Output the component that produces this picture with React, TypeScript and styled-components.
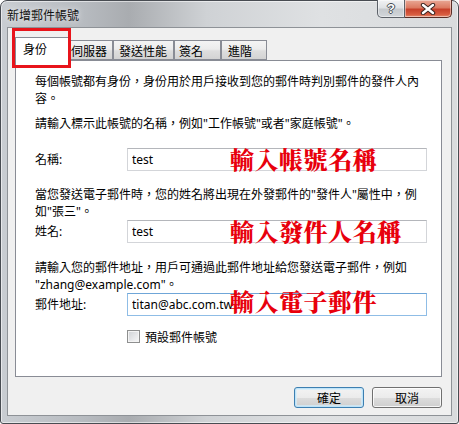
import React from "react";
import styled, { createGlobalStyle } from "styled-components";

const Global = createGlobalStyle`
  html, body { margin: 0; padding: 0; background: #ffffff; }
  body {
    font-family: "Noto Sans", "Noto Sans CJK TC", sans-serif;
    font-size: 12px;
    color: #000;
  }
  * { box-sizing: border-box; }
`;

const Window = styled.div`
  width: 459px;
  height: 424px;
  display: flex;
  flex-direction: column;
  border: 1px solid #484c52;
  border-radius: 7px 7px 3px 3px;
  padding: 0 6px 7px 6px;
  background: linear-gradient(
    90deg,
    #c9cdd2 0%,
    #b7bbc0 18%,
    #a9acb0 28%,
    #cfd2d5 45%,
    #dfe1e3 70%,
    #d9dbdd 100%
  );
  box-shadow: inset 0 0 0 1px rgba(255, 255, 255, 0.55);
`;

const TitleBar = styled.div`
  height: 26px;
  display: flex;
  align-items: center;
  justify-content: space-between;
`;

const Title = styled.span`
  font-family: "Noto Sans CJK TC", sans-serif;
  font-size: 12px;
  color: #111;
  text-shadow: 0 0 6px rgba(255, 255, 255, 0.9);
`;

const CaptionGroup = styled.div`
  display: flex;
  align-self: flex-start;
  margin-top: -1px;
`;

const CaptionButton = styled.div<{ $kind: "help" | "close" }>`
  height: 18px;
  width: ${(p) => (p.$kind === "help" ? 28 : 47)}px;
  display: flex;
  align-items: center;
  justify-content: center;
  border: 1px solid ${(p) => (p.$kind === "help" ? "#5c6168" : "#5a2e26")};
  border-top: none;
  border-left: ${(p) => (p.$kind === "help" ? "1px solid #5c6168" : "none")};
  border-radius: ${(p) => (p.$kind === "help" ? "0 0 0 5px" : "0 0 5px 0")};
  background: ${(p) =>
    p.$kind === "help"
      ? "linear-gradient(180deg, #f1f2f4 0%, #dfe2e5 45%, #c6cace 55%, #d2d6da 100%)"
      : "linear-gradient(180deg, #e9a896 0%, #dc7a62 45%, #c7402a 55%, #d85c40 85%, #e58d6f 100%)"};
  box-shadow: inset 0 0 0 1px rgba(255, 255, 255, 0.45);
`;

const HelpGlyph = styled.span`
  font-family: "Liberation Sans", sans-serif;
  font-weight: bold;
  font-size: 13px;
  line-height: 1;
  color: #fff;
  text-shadow: 1px 0 0 #454b53, -1px 0 0 #454b53, 0 1px 0 #454b53, 0 -1px 0 #454b53;
`;

const Client = styled.div`
  flex: 1;
  display: flex;
  flex-direction: column;
  background: #f0f0f0;
  border: 1px solid #8e9297;
  padding: 9px 9px 7px 7px;
`;

const TabStrip = styled.div`
  height: 23px;
  display: flex;
  align-items: flex-end;
`;

const Tab = styled.div<{ $active?: boolean; $w: number; $pl: number }>`
  position: relative;
  width: ${(p) => p.$w}px;
  height: ${(p) => (p.$active ? 24 : 20)}px;
  margin-bottom: ${(p) => (p.$active ? -1 : 0)}px;
  padding-left: ${(p) => p.$pl}px;
  padding-top: ${(p) => (p.$active ? 3 : 2)}px;
  border: 1px solid #898c95;
  border-bottom: ${(p) => (p.$active ? "none" : "1px solid #898c95")};
  background: ${(p) =>
    p.$active
      ? "#ffffff"
      : "linear-gradient(180deg, #f4f4f4 0%, #ececec 45%, #dedede 55%, #d3d3d3 100%)"};
  z-index: ${(p) => (p.$active ? 2 : 1)};
  font-family: "Noto Sans CJK TC", sans-serif;
  font-size: 12px;
  line-height: 16px;
  white-space: nowrap;
`;

const Highlight = styled.div`
  position: absolute;
  left: -4px;
  top: -10px;
  width: 59px;
  height: 40px;
  border: 3px solid #e8141b;
  pointer-events: none;
`;

const Panel = styled.div`
  height: 317px;
  background: #ffffff;
  border: 1px solid #898c95;
  padding: 12px 0 0 19px;
  display: flex;
  flex-direction: column;
`;

const Para = styled.p<{ $mt: number }>`
  margin: ${(p) => p.$mt}px 0 0 0;
  line-height: 17px;
  white-space: nowrap;
`;

const FieldRow = styled.div<{ $mt: number }>`
  position: relative;
  margin-top: ${(p) => p.$mt}px;
  display: flex;
  align-items: center;
  height: 23px;
`;

const Label = styled.span`
  width: 92px;
  line-height: 17px;
`;

const TextBox = styled.input<{ $focused?: boolean }>`
  width: 300px;
  height: 23px;
  padding: 0 4px;
  margin: 0;
  font-family: "Noto Sans", "Noto Sans CJK TC", sans-serif;
  font-size: 12px;
  color: #000;
  background: #fff;
  border: 1px solid ${(p) => (p.$focused ? "#8fbde6" : "#d3d5d9")};
  border-top-color: ${(p) => (p.$focused ? "#6fa6d8" : "#b4b6bb")};
  outline: none;
`;

const Annotation = styled.span<{ $top: number }>`
  position: absolute;
  left: 195px;
  top: ${(p) => p.$top}px;
  font-family: "Noto Serif CJK TC", "Noto Sans CJK TC", serif;
  font-weight: 900;
  font-size: 24px;
  line-height: 24px;
  letter-spacing: 0.5px;
  color: #e8000c;
  white-space: nowrap;
  pointer-events: none;
`;

const CheckRow = styled.label`
  margin: 14px 0 0 92px;
  display: flex;
  align-items: center;
  gap: 5px;
  height: 13px;
`;

const CheckBox = styled.span`
  width: 13px;
  height: 13px;
  border: 1px solid #8e8f8f;
  background: linear-gradient(135deg, #cfd2d6 0%, #e6e7e9 55%, #f8f8f8 100%);
  box-shadow: inset 0 0 0 1px #f4f4f4;
`;

const ButtonRow = styled.div`
  margin-top: 10px;
  display: flex;
  justify-content: flex-end;
  gap: 8px;
`;

const Button = styled.button<{ $default?: boolean }>`
  width: 70px;
  height: 21px;
  padding: 0;
  font-family: "Noto Sans CJK TC", sans-serif;
  font-size: 12px;
  color: #000;
  border-radius: 3px;
  border: 1px solid ${(p) => (p.$default ? "#3c7fb1" : "#707070")};
  background: linear-gradient(180deg, #f3f3f3 0%, #ebebeb 50%, #dddddd 50%, #cfcfcf 100%);
  box-shadow: ${(p) =>
    p.$default
      ? "inset 0 0 0 1px #bfe3f8, inset 0 0 0 2px rgba(210, 238, 252, 0.7)"
      : "inset 0 0 0 1px rgba(255, 255, 255, 0.8)"};
`;

const tabs = [
  { label: "身份", w: 54, pl: 7, active: true },
  { label: "伺服器", w: 44, pl: 1 },
  { label: "發送性能", w: 61, pl: 5 },
  { label: "簽名", w: 47, pl: 4 },
  { label: "進階", w: 46, pl: 6 },
];

export default function App() {
  return (
    <>
      <Global />
      <Window>
        <TitleBar>
          <Title>新增郵件帳號</Title>
          <CaptionGroup>
            <CaptionButton $kind="help">
              <HelpGlyph>?</HelpGlyph>
            </CaptionButton>
            <CaptionButton $kind="close">
              <svg width="16" height="12" viewBox="0 0 16 12">
                <path d="M3 2 L13 10 M13 2 L3 10" stroke="#3b2420" strokeWidth="4.4" strokeLinecap="round" />
                <path d="M3 2 L13 10 M13 2 L3 10" stroke="#ffffff" strokeWidth="2.4" strokeLinecap="round" />
              </svg>
            </CaptionButton>
          </CaptionGroup>
        </TitleBar>
        <Client>
          <TabStrip>
            {tabs.map((t) => (
              <Tab key={t.label} $active={t.active} $w={t.w} $pl={t.pl}>
                {t.label}
                {t.active && <Highlight />}
              </Tab>
            ))}
          </TabStrip>
          <Panel>
            <Para $mt={0}>
              每個帳號都有身份，身份用於用戶接收到您的郵件時判別郵件的發件人內
              <br />
              容。
            </Para>
            <Para $mt={8}>請輸入標示此帳號的名稱，例如"工作帳號"或者"家庭帳號"。</Para>
            <FieldRow $mt={16}>
              <Label>名稱:</Label>
              <TextBox readOnly value="test" />
              <Annotation $top={-1}>輸入帳號名稱</Annotation>
            </FieldRow>
            <Para $mt={15}>
              當您發送電子郵件時，您的姓名將出現在外發郵件的"發件人"屬性中，例
              <br />
              如"張三"。
            </Para>
            <FieldRow $mt={0}>
              <Label>姓名:</Label>
              <TextBox readOnly value="test" />
              <Annotation $top={-1}>輸入發件人名稱</Annotation>
            </FieldRow>
            <Para $mt={16}>
              請輸入您的郵件地址，用戶可通過此郵件地址給您發送電子郵件，例如
              <br />
              "zhang@example.com"。
            </Para>
            <FieldRow $mt={0}>
              <Label>郵件地址:</Label>
              <TextBox readOnly $focused value="titan@abc.com.tw" />
              <Annotation $top={-4}>輸入電子郵件</Annotation>
            </FieldRow>
            <CheckRow>
              <CheckBox />
              <span>預設郵件帳號</span>
            </CheckRow>
          </Panel>
          <ButtonRow>
            <Button $default>確定</Button>
            <Button>取消</Button>
          </ButtonRow>
        </Client>
      </Window>
    </>
  );
}
